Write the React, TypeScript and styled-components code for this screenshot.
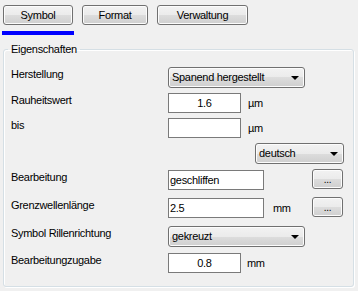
import React from 'react'
import styled, { createGlobalStyle } from 'styled-components'

const GlobalStyle = createGlobalStyle`
  html, body {
    margin: 0;
    padding: 0;
    background: #f0f0f0;
  }
  body {
    font-family: "Liberation Sans", Arial, sans-serif;
    font-size: 11px;
    color: #000;
  }
`

const Page = styled.div`
  width: 358px;
  height: 291px;
  box-sizing: border-box;
  padding: 5px 4px 0 3px;
  background: #f0f0f0;
  letter-spacing: -0.3px;
`

const TabBar = styled.div`
  display: flex;
  gap: 9px;
  align-items: flex-start;
`

const TabItem = styled.div`
  display: flex;
  flex-direction: column;
`

const WinButton = styled.div<{ $w: number; $h?: number }>`
  width: ${p => p.$w}px;
  height: ${p => p.$h ?? 20}px;
  box-sizing: border-box;
  border: 1px solid #707070;
  border-radius: 3px;
  background: linear-gradient(#f2f2f2 0%, #ebebeb 50%, #dddddd 50%, #cfcfcf 100%);
  box-shadow: inset 0 0 0 1px #fcfcfc;
  display: flex;
  align-items: center;
  justify-content: center;
  line-height: 13px;
`

const Indicator = styled.div<{ $on: boolean }>`
  height: 4px;
  margin: 6px -1px 0 -1px;
  background: ${p => (p.$on ? '#0000ff' : 'transparent')};
`

const GroupBox = styled.fieldset`
  margin: 8px 0 0 0;
  padding: 11px 9px 13px 7px;
  border: 1px solid #d5dfe5;
  border-radius: 3px;
  box-shadow: 1px 1px 0 #ffffff, inset 1px 1px 0 #ffffff;
  min-width: 0;
`

const Legend = styled.legend`
  margin-left: -3px;
  padding: 0 3px;
  line-height: 13px;
`

const Row = styled.div<{ $h: number }>`
  display: grid;
  grid-template-columns: 157px 1fr;
  height: ${p => p.$h}px;
  align-items: start;
`

const Label = styled.div`
  padding-top: 1px;
  line-height: 13px;
  white-space: nowrap;
`

const Cell = styled.div<{ $end?: boolean }>`
  display: flex;
  align-items: flex-start;
  justify-content: ${p => (p.$end ? 'flex-end' : 'flex-start')};
`

const TextBox = styled.div<{ $w: number; $center?: boolean }>`
  width: ${p => p.$w}px;
  height: 20px;
  box-sizing: border-box;
  border: 1px solid #7a7a7a;
  background: #fff;
  display: flex;
  align-items: center;
  justify-content: ${p => (p.$center ? 'center' : 'flex-start')};
  padding: 0 ${p => (p.$center ? 0 : 1)}px;
  line-height: 13px;
`

const Unit = styled.div<{ $gap: number }>`
  margin-left: ${p => p.$gap}px;
  padding-top: 4px;
  line-height: 13px;
`

const Combo = styled.div<{ $w: number }>`
  width: ${p => p.$w}px;
  height: 21px;
  box-sizing: border-box;
  border: 1px solid #707070;
  border-radius: 3px;
  background: linear-gradient(#f2f2f2 0%, #ebebeb 50%, #dddddd 50%, #cfcfcf 100%);
  box-shadow: inset 0 0 0 1px #fcfcfc;
  display: flex;
  align-items: center;
  justify-content: space-between;
  padding: 0 5px 0 3px;
  line-height: 13px;
`

const Arrow = styled.span`
  width: 0;
  height: 0;
  border-left: 4px solid transparent;
  border-right: 4px solid transparent;
  border-top: 4px solid #000;
`

const Dots = styled(WinButton)`
  margin-left: auto;
  margin-right: 1px;
  margin-top: -1px;
  font-size: 10px;
`

const ComboBox: React.FC<{ w: number; text: string }> = ({ w, text }) => (
  <Combo $w={w}>
    <span>{text}</span>
    <Arrow />
  </Combo>
)

export default function App() {
  return (
    <>
      <GlobalStyle />
      <Page>
        <TabBar>
          <TabItem>
            <WinButton $w={70}>Symbol</WinButton>
            <Indicator $on />
          </TabItem>
          <TabItem>
            <WinButton $w={66}>Format</WinButton>
            <Indicator $on={false} />
          </TabItem>
          <TabItem>
            <WinButton $w={91}>Verwaltung</WinButton>
            <Indicator $on={false} />
          </TabItem>
        </TabBar>

        <GroupBox>
          <Legend>Eigenschaften</Legend>
          <Row $h={26}>
            <Label>Herstellung</Label>
            <Cell><ComboBox w={137} text="Spanend hergestellt" /></Cell>
          </Row>
          <Row $h={25}>
            <Label>Rauheitswert</Label>
            <Cell>
              <TextBox $w={73} $center>1.6</TextBox>
              <Unit $gap={7}>µm</Unit>
            </Cell>
          </Row>
          <Row $h={25}>
            <Label>bis</Label>
            <Cell>
              <TextBox $w={73} />
              <Unit $gap={7}>µm</Unit>
            </Cell>
          </Row>
          <Row $h={27}>
            <Label />
            <Cell $end><ComboBox w={89} text="deutsch" /></Cell>
          </Row>
          <Row $h={28}>
            <Label>Bearbeitung</Label>
            <Cell>
              <TextBox $w={96}>geschliffen</TextBox>
              <Dots $w={31}>...</Dots>
            </Cell>
          </Row>
          <Row $h={28}>
            <Label>Grenzwellenlänge</Label>
            <Cell>
              <TextBox $w={96}>2.5</TextBox>
              <Unit $gap={9}>mm</Unit>
              <Dots $w={31}>...</Dots>
            </Cell>
          </Row>
          <Row $h={27}>
            <Label>Symbol Rillenrichtung</Label>
            <Cell><ComboBox w={137} text="gekreuzt" /></Cell>
          </Row>
          <Row $h={20}>
            <Label>Bearbeitungzugabe</Label>
            <Cell>
              <TextBox $w={73} $center>0.8</TextBox>
              <Unit $gap={6}>mm</Unit>
            </Cell>
          </Row>
        </GroupBox>
      </Page>
    </>
  )
}
